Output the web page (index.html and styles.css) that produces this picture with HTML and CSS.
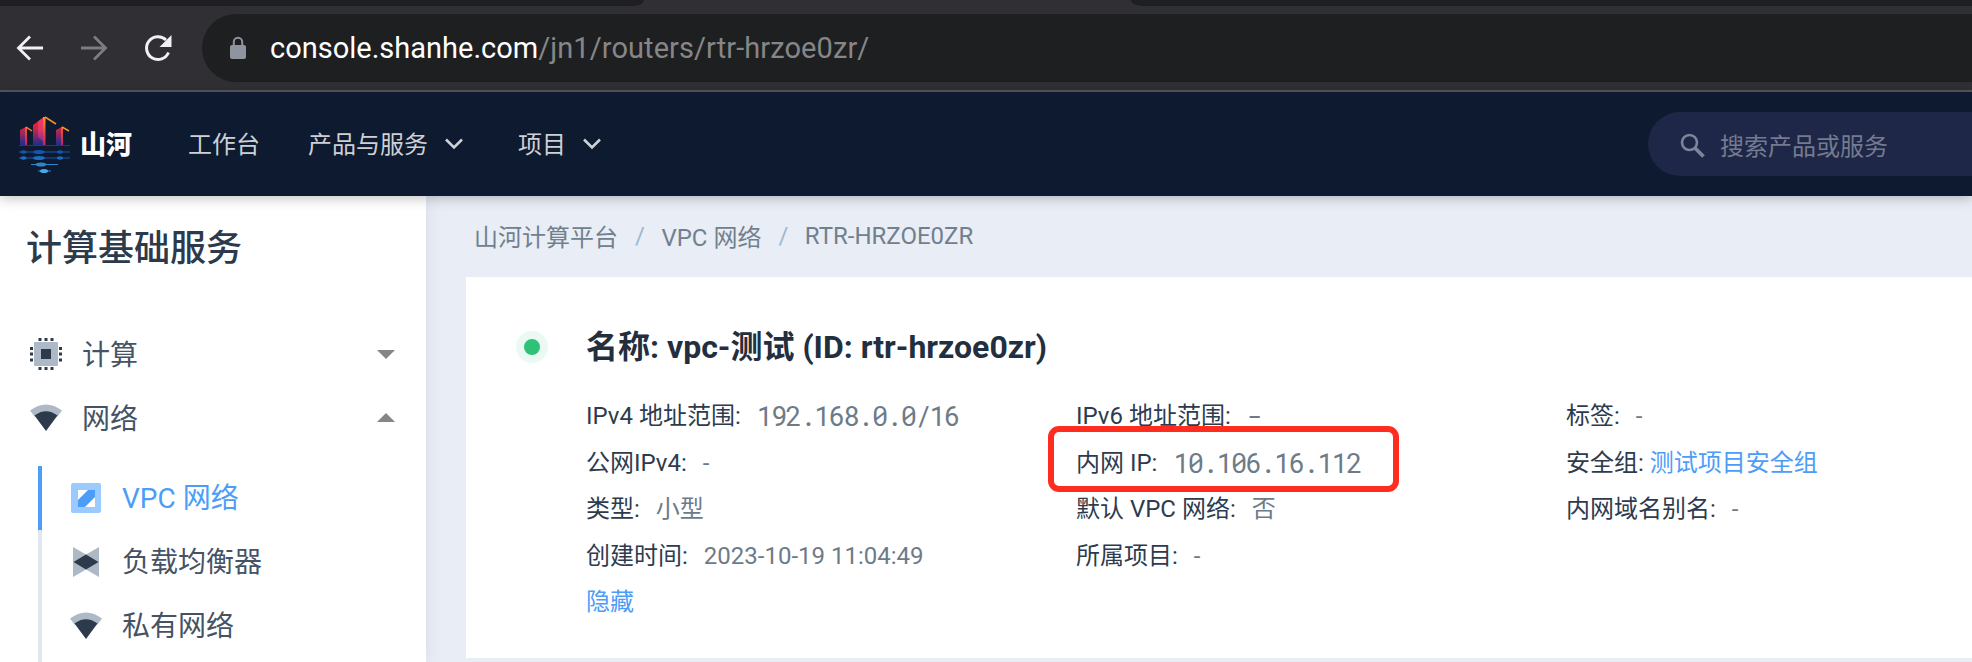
FILE: index.html
```html
<!DOCTYPE html>
<html lang="zh-CN">
<head>
<meta charset="utf-8">
<title>VPC 网络</title>
<link rel="stylesheet" href="styles.css">
</head>
<body>
<div class="window">
  <div class="tabstrip"><span class="tab tab-left"></span><span class="tab tab-right"></span></div>
  <div class="toolbar">
    <svg class="tool" width="32" height="32" viewBox="0 0 32 32" fill="none" stroke="#f1f1f3" stroke-width="2.8"><path d="M29 16H5M16 4.5 4.500 16 16 27.500"/></svg>
    <svg class="tool" width="32" height="32" viewBox="0 0 32 32" fill="none" stroke="#7d7d80" stroke-width="2.8"><path d="M3 16h24M16 4.500 27.500 16 16 27.500"/></svg>
    <svg class="tool" width="32" height="32" viewBox="0 0 32 32" fill="none" stroke="#f1f1f3" stroke-width="3"><path d="M26.500 20.500A11.400 11.400 0 1 1 24 8"/><path d="M29.500 3v12h-12z" fill="#f1f1f3" stroke="none"/></svg>
    <div class="omnibox">
      <svg width="18" height="24" viewBox="0 0 18 24"><rect x="1" y="9" width="16" height="14" rx="2" fill="#8f959e"/><path d="M4.800 10V6a4.200 4.200 0 0 1 8.400 0v4" fill="none" stroke="#8f959e" stroke-width="2"/></svg>
      <div class="url"><span class="host">console.shanhe.com</span><span class="path">/jn1/routers/rtr-hrzoe0zr/</span></div>
    </div>
  </div>
  <header class="header">
    <svg class="logo" width="52" height="58" viewBox="0 0 52 58">
      <defs>
        <linearGradient id="g" x1="0" y1="0" x2="0" y2="1"><stop offset="0" stop-color="#f0202c"/><stop offset=".4" stop-color="#d02446"/><stop offset="1" stop-color="#0c2f94"/></linearGradient>
        <linearGradient id="p" x1="0" y1="0" x2="0" y2="1"><stop offset="0" stop-color="#f7385c"/><stop offset=".5" stop-color="#e03868"/><stop offset="1" stop-color="#7c2f8c"/></linearGradient>
        <linearGradient id="o" x1="0" y1="0" x2="0" y2="1"><stop offset="0" stop-color="#ff9a1c"/><stop offset=".5" stop-color="#e84a40"/><stop offset="1" stop-color="#c81870"/></linearGradient>
      </defs>
      <path d="M1 14 7 11v19H1zM14 9 25 1v29H14zM37 14l6-3v19h-6z" fill="url(#g)"/>
      <path d="M19 5.500 25 1v25l-6-5z" fill="url(#p)"/>
      <path d="M6 11h2v19H6zM24 1h2.500v29H24zM42 11h2v19h-2z" fill="url(#o)"/>
      <path d="m7 11 6 4M26 1l11 7M43 11l7 4" fill="none" stroke="#f2912b" stroke-width="1.500"/>
      <path d="M0 29.500h51" stroke="#153b91"/>
      <g stroke-width="1.200"><path d="M0 36h51M0 42h51" stroke="#1559ad"/><path d="M12 48.500h27M19 55h13" stroke="#2587cf"/></g>
      <g fill="#1256ae"><ellipse cx="4.500" cy="36" rx="3" ry="1.700"/><ellipse cx="20" cy="36" rx="6" ry="2"/><ellipse cx="41" cy="36" rx="3" ry="1.700"/></g>
      <g fill="#176fc0"><ellipse cx="4.500" cy="42" rx="3" ry="1.700"/><ellipse cx="20" cy="42" rx="6" ry="2"/><ellipse cx="41" cy="42" rx="3" ry="1.700"/></g>
      <ellipse cx="22" cy="48.500" rx="5.500" ry="2" fill="#2a87ce"/><ellipse cx="25" cy="55" rx="4" ry="2" fill="#4aa7e4"/>
    </svg>
    <span class="brand">山河</span>
    <nav class="nav">
      <span class="nav-item">工作台</span>
      <span class="nav-item">产品与服务<svg width="20" height="12" viewBox="0 0 20 12"><path d="m2 1.500 8 8 8-8"/></svg></span>
      <span class="nav-item">项目<svg width="20" height="12" viewBox="0 0 20 12"><path d="m2 1.500 8 8 8-8"/></svg></span>
    </nav>
    <div class="search">
      <svg width="26" height="26" viewBox="0 0 26 26" fill="none" stroke="#7e8499"><circle cx="9.500" cy="9.500" r="7.500" stroke-width="2.600"/><path d="m15 15 8.500 8.500" stroke-width="3.800"/></svg>
      <span>搜索产品或服务</span>
    </div>
  </header>
  <div class="body">
    <aside class="sidebar">
      <h1 class="side-title">计算基础服务</h1>
      <div class="group">
        <svg width="32" height="32" viewBox="0 0 32 32"><rect x="4" y="4" width="24" height="24" rx="1" fill="#adb9c7"/><path fill="#2c3a4b" d="M11 11h10v10H11zM8.500 0h3v3h-3zM14.500 0h3v3h-3zM20.500 0h3v3h-3zM8.500 29h3v3h-3zM14.500 29h3v3h-3zM20.500 29h3v3h-3zM0 9h3v3H0zM0 14.500h3v3H0zM0 20.500h3v3H0zM29 9h3v3h-3zM29 14.500h3v3h-3zM29 20.500h3v3h-3z"/></svg>
        <span>计算</span><i class="caret down"></i>
      </div>
      <div class="group">
        <svg width="32" height="32" viewBox="0 0 32 32"><path d="M0 8.500Q16-3.500 32 8.500L27.500 14.500H4.500z" fill="#adb9c7"/><path d="M4.500 13.500Q16 5 27.500 13.500L16 29z" fill="#2c3a4b"/></svg>
        <span>网络</span><i class="caret up"></i>
      </div>
      <div class="sub">
        <div class="sub-item active">
          <svg width="32" height="32" viewBox="0 0 32 32"><rect x="1" y="1" width="30" height="30" rx="2" fill="#9bcaff"/><path d="M8 8h17v17H8z" fill="#fff"/><path d="M8 18 18 8h7v7L15 25H8z" fill="#4c9df8"/></svg>
          <span>VPC 网络</span>
        </div>
        <div class="sub-item">
          <svg width="32" height="32" viewBox="0 0 32 32"><path d="M3 1 16 8.500 29 1v30L16 23.500 3 31z" fill="#adb9c7"/><path d="M3.500 16 16 8.500 28.500 16 16 23.500z" fill="#2c3a4b"/></svg>
          <span>负载均衡器</span>
        </div>
        <div class="sub-item">
          <svg width="32" height="32" viewBox="0 0 32 32"><path d="M0 8.500Q16-3.500 32 8.500L27.500 14.500H4.500z" fill="#adb9c7"/><path d="M4.500 13.500Q16 5 27.500 13.500L16 29z" fill="#2c3a4b"/></svg>
          <span>私有网络</span>
        </div>
        <div class="sub-item"></div>
      </div>
    </aside>
    <main class="main">
      <div class="crumbs"><span>山河计算平台</span><i>/</i><span>VPC 网络</span><i>/</i><span>RTR-HRZOE0ZR</span></div>
      <section class="card">
        <div class="status"></div>
        <div class="detail">
          <h2 class="name">名称: vpc-测试 (ID: rtr-hrzoe0zr)</h2>
          <div class="cols">
            <div class="col">
              <p><b>IPv4 地址范围:</b><span class="mono">192.168.0.0/16</span></p>
              <p><b>公网IPv4:</b><span>-</span></p>
              <p><b>类型:</b><span>小型</span></p>
              <p><b>创建时间:</b><span>2023-10-19 11:04:49</span></p>
              <p><a>隐藏</a></p>
            </div>
            <div class="col">
              <p><b>IPv6 地址范围:</b><span class="mono">-</span></p>
              <p class="marked"><b>内网 IP:</b><span class="mono">10.106.16.112</span></p>
              <p><b>默认 VPC 网络:</b><span>否</span></p>
              <p><b>所属项目:</b><span>-</span></p>
            </div>
            <div class="col">
              <p><b>标签:</b><span>-</span></p>
              <p class="tight"><b>安全组:</b><a>测试项目安全组</a></p>
              <p><b>内网域名别名:</b><span>-</span></p>
            </div>
          </div>
        </div>
      </section>
    </main>
  </div>
</div>
</body>
</html>
```
FILE: styles.css
```css
*, *::after { box-sizing: border-box; margin: 0; padding: 0; }
body { font-family: Roboto, "Noto Sans CJK SC", sans-serif; font-size: 24px; white-space: nowrap; }
i, b { font-style: normal; font-weight: 400; }
svg { display: block; flex: none; }
.window { width: 1972px; height: 662px; overflow: hidden; display: flex; flex-direction: column; }
.tabstrip { height: 6px; display: flex; justify-content: space-between; background: #302f33; flex: none; }
.tab { background: #1e1f21; }
.tab-left { width: 644px; border-bottom-right-radius: 12px 6px; }
.tab-right { width: 841px; border-bottom-left-radius: 12px 6px; }
.toolbar { height: 86px; flex: none; background: #302f33; border-bottom: 2px solid #56565b; display: flex; align-items: center; padding: 0 0 0 14px; }
.tool { margin-right: 32px; }
.tool:nth-of-type(3) { margin-right: 28px; }
.omnibox { flex: 1; height: 68px; border-radius: 34px 0 0 34px; background: #1e1f21; display: flex; align-items: center; padding-left: 27px; }
.url { margin-left: 23px; font-size: 29px; }
.host { color: #fff; }
.path { color: #868688; letter-spacing: .08px; }
.header { height: 104px; flex: none; background: #0e1a30; display: flex; align-items: center; padding-left: 19px; position: relative; z-index: 2; box-shadow: 0 2px 12px rgba(0, 0, 0, .25); }
.logo { margin-top: 2px; }
.brand { margin-left: 9px; padding-bottom: 3px; font-size: 26px; font-weight: 900; color: #fff; }
.nav { display: flex; margin-left: 56px; gap: 48px; color: #cdd0d5; padding-bottom: 4px; }
.nav-item { display: flex; align-items: center; }
.nav-item svg { margin: 4px 1px 0 16px; fill: none; stroke: #cdd0d5; stroke-width: 2.600; }
.nav-item:last-child { margin-left: 5px; }
.search { margin-left: auto; width: 324px; height: 64px; border-radius: 32px 0 0 32px; background: #1e2747; display: flex; align-items: center; padding-left: 32px; gap: 14px; color: #747b90; }
.search svg { margin-top: 3px; }
.body { flex: 1; display: flex; min-height: 0; background: #e9edf5; }
.sidebar { width: 426px; background: #fff; box-shadow: 0 0 16px rgba(60, 70, 110, .1); flex: none; }
.side-title { height: 100px; line-height: 100px; padding: 3px 0 0 26px; font-size: 36px; font-weight: 500; color: #2c3a4b; margin-bottom: 26px; }
.group { height: 64px; display: flex; align-items: center; padding: 0 31px 0 30px; font-size: 28px; color: #455365; }
.group span { margin-left: 20px; padding-bottom: 3px; }
.caret { margin-left: auto; border: 9px solid transparent; border-top-width: 0; border-bottom-width: 0; }
.down { border-top: 9px solid #868686; }
.up { border-bottom: 9px solid #868686; margin-bottom: 2px; }
.sub { margin: 16px 0 0 38px; }
.sub-item { height: 64px; border-left: 4px solid #dfe7ee; display: flex; align-items: center; padding-left: 28px; gap: 20px; font-size: 28px; color: #455365; }
.sub-item span { padding-bottom: 4px; }
.active { border-color: #4c9df8; color: #4c9df8; }
.main { flex: 1; padding-left: 40px; }
.crumbs { height: 81px; display: flex; align-items: center; padding: 0 0 2px 8px; color: #71808f; }
.crumbs i { margin: 0 16.500px 0 17px; color: #9db8d2; }
.card { height: 381px; background: #fff; display: flex; padding: 46px 0 0 50px; }
.status { width: 32px; height: 32px; margin-top: 8px; border-radius: 50%; border: 8px solid #eaf9f1; background: #30c178; }
.detail { margin-left: 38px; }
.name { height: 48px; line-height: 48px; font-size: 32px; font-weight: 700; color: #232f3f; }
.cols { display: flex; margin-top: 22px; }
.col { width: 490px; color: #2d3b4e; }
.col p { height: 46.500px; line-height: 46.500px; display: flex; gap: 16px; }
.col p.tight { gap: 6px; }
.col span { color: #6d7b89; }
.col a { color: #4c9df8; }
.col .mono { font-family: "Roboto Mono", "Noto Sans Mono", "Liberation Mono", monospace; font-size: 27px; letter-spacing: -1.800px; }
.marked { position: relative; }
.marked::after { content: ""; position: absolute; left: -28px; top: -14px; width: 351px; height: 66px; border: 6px solid #ff2d20; border-radius: 11px; }
```
